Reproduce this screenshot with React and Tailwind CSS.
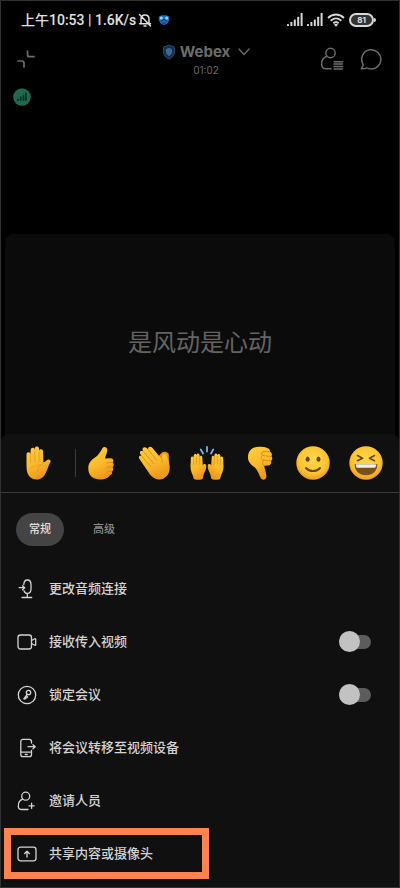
import React, { useState } from 'react';

// Shared yellow shading for the reaction drawings
const EmojiDefs = () => (
  <svg width="0" height="0" className="absolute" aria-hidden="true">
    <defs>
      <linearGradient id="skin" x1="0" y1="0" x2="0.4" y2="1">
        <stop offset="0" stopColor="#ffcf40" />
        <stop offset="0.6" stopColor="#fbb92c" />
        <stop offset="1" stopColor="#ec981e" />
      </linearGradient>
      <radialGradient id="face" cx="0.5" cy="0.4" r="0.6">
        <stop offset="0" stopColor="#ffd84a" />
        <stop offset="0.7" stopColor="#fcc332" />
        <stop offset="1" stopColor="#ec9a22" />
      </radialGradient>
    </defs>
  </svg>
);

const RaisedHand = () => (
  <svg viewBox="0 0 34 34" className="size-[34px]">
    <path
      d="M5.500 20V8.500c0-2.800 3.400-3 4-.4L9.700 3.900c0-2.600 3.700-2.800 4.100-.2l.1-1.500c.2-2.400 3.900-2.400 4.100.1l.2 2.500c.3-2.100 3.700-2 3.900.6l.3 11.200c1.800-.6 2.600-1.700 3.500-2.500 2-1.600 4.500 0 3.500 2-1.900 3.500-2.600 6.700-4.700 10.800-2 4.200-4.800 6.500-9.200 6.500-6.800 0-10-5-10-13.400z"
      fill="url(#skin)"
    />
    <path d="M9.600 7.500v9M13.900 5v11M18.100 6v10M9.500 22.500c3.500-3 7.500-4 12-3.500M19.500 19.500c-2.300 1.700-3.200 3.700-3 6" stroke="#e0951f" strokeWidth="0.7" fill="none" strokeLinecap="round" />
  </svg>
);

const ThumbUp = () => (
  <svg viewBox="0 0 34 34" className="size-[34px]">
    <path
      d="M18.500 2c1.500-2.300 5.200-.8 4.800 2.300-.3 2.800-1.500 5.200-2.300 8.200l5.500-.2c3 0 3.600 3.200 2 4.200 1.700 1 1.600 3.500 0 4.500 1.300 1.300 1 3.600-.8 4.400.9 1.500.3 3.400-1.700 3.900-1.400 2-3.700 4-8.800 4.200C9.500 33.700 4.300 30 4.300 22.500c0-5.500 2.700-8.300 6.700-11 3.200-2.100 5.700-5.800 7.500-9.500z"
      fill="url(#skin)"
    />
    <path d="M28.300 16.600c-2-.4-4-.3-5.500.6M28.300 21c-2-.4-4-.2-5.500.6M27.500 25.400c-2-.2-3.500 0-4.500.8" stroke="#d98716" strokeWidth="0.9" fill="none" strokeLinecap="round" />
  </svg>
);

const Clap = () => (
  <svg viewBox="0 0 34 34" className="size-[34px]">
    <path d="M20 12l4.800-5.500c2-1.500 4.500-.8 6 .2 1.500 1.300 1 3 1 4.800l.5 9.500-4 8z" fill="#e3921e" />
    <path
      d="M2.800 13.500c-2.200-2.700-.2-4.800 2-3.300L3.300 8C2 5.500 4.500 3.800 6.600 5.600L5.800 4.400C4.600 1.900 7.500.2 9.600 2l1.700 1.500C10.300 1 13.500-.4 15.300 1.700l9.500 11.500c.5-1.800-.3-4 1.200-5.300 1.400-1 3.200-.2 3.700 1.700.7 3.400 2.500 6.400 2.900 10.900.4 5.700-1.700 9.700-6 11.900-5 2.300-9.500.6-13.400-3.700z"
      fill="url(#skin)"
    />
    <path d="M5 10.500l8.800 10.300M6.800 6l9.700 11.600M11.500 4l8.500 10.600M24.800 13.200l.5 3.500" stroke="#dd8f1c" strokeWidth="0.9" fill="none" strokeLinecap="round" />
  </svg>
);

const RaisedHands = () => (
  <svg viewBox="0 0 34 34" className="size-[34px]">
    <path d="M10.800 3.500l2.200 4M17 1v4.500M23.200 3.500l-2.200 4" stroke="#74b4e6" strokeWidth="1.800" fill="none" strokeLinecap="round" />
    <g id="leftHand">
      <path
        d="M.5 20l.4-8c.2-2 2.300-2 2.600-.2l.2-2.300c.2-2 2.500-2.200 2.900-.2.200-2.200 2.700-2.300 3-.1l.2 1.800c.3-1.600 2.200-1.500 2.500.3l.5 8.200c.7-1.800 3-2 3.400 0 .3 3-.9 5.200-2.100 7.700-.8 2-.8 3-1.300 5-.8 2-8.400 2-9.200 0C3 28.500.5 26 .5 20z"
        fill="url(#skin)"
      />
      <path d="M3.600 12.500v6M6.600 10.500V18M9.700 11.500v7" stroke="#dd8f1c" strokeWidth="0.7" fill="none" strokeLinecap="round" />
    </g>
    <use href="#leftHand" transform="translate(34 0) scale(-1 1)" />
  </svg>
);

const ThumbDown = () => (
  <svg viewBox="0 0 34 34" className="size-[34px]">
    <path
      d="M5 11.500C5 4.500 9.500.8 16 .8c3.200 0 6 .1 8 1.300 2 .3 3.300 1.900 3 3.700 1.800.8 2.500 3 1.400 4.500 1.300 1.200 1.200 3.500-.4 4.500.7 2.800-.6 4.500-3 4.600l-3.800.3c.4 3.300 2 6.800 2.200 10.300.2 3.600-3.600 4.900-5.500 2.200-2-3.500-3-7.600-6-10.600C8.300 18.600 5 16.500 5 11.500z"
      fill="url(#skin)"
    />
    <path d="M26.700 6c-2.500-.8-5-.8-7.500.2-1.300 1-.8 2.800.6 3.200 2.700.8 5.300.8 8.100.9M19.500 9.500c-2 1.200-1.600 3.600.2 4.300 2.500.8 5 .9 7.800 1M20.500 14.200c-1.500 1.600-.8 3.800 0 5.300" stroke="#d98716" strokeWidth="0.9" fill="none" strokeLinecap="round" />
  </svg>
);

const Smile = () => (
  <svg viewBox="0 0 34 34" className="size-[34px]">
    <circle cx="17" cy="17" r="16.7" fill="url(#face)" />
    <ellipse cx="11.7" cy="13.2" rx="2" ry="2.6" fill="#6b4413" />
    <ellipse cx="22.5" cy="13.2" rx="2" ry="2.6" fill="#6b4413" />
    <path d="M10 22c3.500 4 10.500 4 14 0" stroke="#6b4413" strokeWidth="2" fill="none" strokeLinecap="round" />
  </svg>
);

const Laugh = () => (
  <svg viewBox="0 0 34 34" className="size-[34px]">
    <circle cx="17" cy="17" r="16.7" fill="url(#face)" />
    <path d="M8.500 9.500l5 2.800-5 2.400M25.500 9.500l-5 2.800 5 2.400" stroke="#6b4413" strokeWidth="1.6" fill="none" strokeLinecap="round" strokeLinejoin="round" />
    <path d="M5.700 18h22.600c.6 6.800-4.700 11.200-11.300 11.200S5.100 24.800 5.700 18z" fill="#7a501b" />
    <path d="M6.800 18.300h20.400c.2 2-.6 3.400-1.900 3.400H8.700c-1.300 0-2.100-1.400-1.900-3.400z" fill="#f4f0e6" />
  </svg>
);

const reactions = [
  { name: '赞', icon: ThumbUp },
  { name: '鼓掌', icon: Clap },
  { name: '欢呼', icon: RaisedHands },
  { name: '不赞同', icon: ThumbDown },
  { name: '微笑', icon: Smile },
  { name: '大笑', icon: Laugh }
];

// 20px line icon frame used by the menu rows
const LineIcon = ({ children }) => (
  <svg viewBox="0 0 20 20" className="size-5 shrink-0" fill="none" stroke="currentColor" strokeWidth="1.3" strokeLinecap="round" strokeLinejoin="round" aria-hidden="true">
    {children}
  </svg>
);

const AudioIcon = () => (
  <LineIcon>
    <path d="M6.800 5.500C6.900 2.800 8.300 1 10.400 1c2.200 0 3.600 1.900 3.600 4.600v4.200c0 2.700-1.400 4.600-3.600 4.600-1.600 0-2.900-1-3.400-2.700M10.300 14.400v4M5 18.500h9.700M2.200 8.700h5.200M5.500 6.700l2.200 2-2.200 2" />
  </LineIcon>
);

const VideoIcon = () => (
  <LineIcon>
    <rect x="1" y="3" width="13.5" height="14" rx="2.5" />
    <path d="M14.500 8.500l3.400-1.800c.4-.2.800 0 .8.500v5.600c0 .5-.4.700-.8.500l-3.400-1.800" />
  </LineIcon>
);

const LockIcon = () => (
  <LineIcon>
    <circle cx="10" cy="10" r="8.7" />
    <circle cx="11.5" cy="7.5" r="2.2" />
    <path d="M10.200 9.300l-3.400 4.500M9.200 10.700l1.300 1c-.2 1-1 1.500-2 1.200-.1 1-.8 1.400-1.700.9" />
  </LineIcon>
);

const TransferIcon = () => (
  <LineIcon>
    <path d="M14.500 5V3.500c0-1.400-.8-2.200-2.200-2.200H6c-1.400 0-2.200.8-2.200 2.200v13c0 1.400.8 2.200 2.200 2.200h6.300c1.400 0 2.200-.8 2.200-2.200V12.500M3.800 14.200h10.700M8.200 16.500h2M11 8.700h7M16 6.700l2.200 2-2.200 2" />
  </LineIcon>
);

const InviteIcon = () => (
  <LineIcon>
    <circle cx="8.7" cy="5.2" r="4" />
    <path d="M5.800 8.200c-3 1-4.600 3.800-4.500 7 .1 2 1.100 3.300 3.200 3.300H11M14.600 12.200v5.200M12 14.800h5.200" />
  </LineIcon>
);

const ShareIcon = () => (
  <LineIcon>
    <rect x="1" y="3.2" width="18" height="13.6" rx="2.5" />
    <path d="M10 13V7.500M7.700 9.500L10 7.200l2.300 2.300" />
  </LineIcon>
);

const menuItems = [
  { id: 'audio', label: '更改音频连接', icon: AudioIcon },
  { id: 'video', label: '接收传入视频', icon: VideoIcon, toggle: true },
  { id: 'lock', label: '锁定会议', icon: LockIcon, toggle: true },
  { id: 'transfer', label: '将会议转移至视频设备', icon: TransferIcon },
  { id: 'invite', label: '邀请人员', icon: InviteIcon },
  { id: 'share', label: '共享内容或摄像头', icon: ShareIcon, highlight: true }
];

const SignalIcon = () => (
  <svg viewBox="0 0 16 13" className="h-[13px] w-4" fill="#d8d8d8" aria-hidden="true">
    <rect x="0" y="11" width="2" height="2" rx="0.5" />
    <rect x="3.4" y="9" width="2" height="4" rx="0.5" />
    <rect x="6.8" y="6.5" width="2" height="6.5" rx="0.5" />
    <rect x="10.2" y="3.7" width="2" height="9.3" rx="0.5" />
    <rect x="13.6" y="0" width="2" height="13" rx="0.5" />
  </svg>
);

const StatusBar = () => (
  <div className="flex h-[37px] items-center justify-between pr-[23px] pl-5 text-[#e0e0e0]">
    <div className="flex items-center">
      <span className="font-[Roboto,'Noto_Sans_CJK_SC',sans-serif] text-sm font-medium whitespace-nowrap">上午10:53 | 1.6K/s</span>
      <svg viewBox="0 0 14 14" className="ml-0.5 size-3.5" fill="none" stroke="currentColor" strokeWidth="1.5" strokeLinecap="round" aria-hidden="true">
        <path d="M3 10.500V6.300C3 3.500 4.700 2 7 2s4 1.500 4 4.300v4.200M1.500 10.800h11M6 13h2M1.500 1.500l11 11.500" />
      </svg>
      <svg viewBox="0 0 12 12" className="ml-1.5 size-3" aria-hidden="true">
        <path d="M1 2.500C3 .8 9 .8 11 2.500c1 3-.5 7.500-5 8.500C1.500 10 0 5.500 1 2.500z" fill="#1c6fc0" />
        <circle cx="3.3" cy="4" r="1.5" fill="#9fd6ee" />
        <circle cx="8.7" cy="4" r="1.5" fill="#9fd6ee" />
        <path d="M3 7.200l3-1.700 3 1.700M4.500 9h3" stroke="#0b2f60" fill="none" />
      </svg>
    </div>
    <div className="flex items-center gap-1">
      <SignalIcon />
      <SignalIcon />
      <svg viewBox="0 0 18 14" className="h-3.5 w-[18px]" fill="none" stroke="#d8d8d8" strokeWidth="1.9" aria-hidden="true">
        <path d="M1 5c4.800-4.600 11.200-4.600 16 0M3.700 7.700c3.200-3 7.400-3 10.600 0M6.300 10.300c1.600-1.500 3.800-1.500 5.400 0" />
        <path d="M7 11.500L9 13.800l2-2.300c-1.200-.9-2.800-.9-4 0z" fill="#d8d8d8" stroke="none" />
      </svg>
      <div className="flex items-center">
        <div className="flex h-3.5 w-[25px] items-center justify-center rounded-full border-2 border-[#d8d8d8] bg-[#333333] text-[8px] font-bold">81</div>
        <div className="h-1 w-0.5 rounded-r-full bg-[#d8d8d8]" />
      </div>
    </div>
  </div>
);

const MeetingHeader = () => (
  <header className="grid grid-cols-[1fr_auto_1fr] items-center px-4 text-[#6c6c6c]">
    <button type="button" aria-label="最小化" className="justify-self-start">
      <svg viewBox="0 0 18 18" className="size-[18px]" fill="none" stroke="currentColor" strokeWidth="1.7" strokeLinecap="round" aria-hidden="true">
        <path d="M10.500 1v3.700c0 1.300.7 2 2 2H17M1 11h4c1.300 0 2 .7 2 2v4" />
      </svg>
    </button>
    <div className="ml-3 flex flex-col items-center pt-0.5">
      <button type="button" className="flex items-center">
        <svg viewBox="0 0 14 16" className="mr-1 h-4 w-3.5" aria-hidden="true">
          <path d="M7 1l5.500 2v5c0 3.300-2.200 5.700-5.500 7C3.700 13.700 1.500 11.300 1.500 8V3z" fill="#14304c" stroke="#25496e" />
          <path d="M7 4l3 1v3c0 1.800-1.200 3.100-3 4-1.800-.9-3-2.200-3-4V5z" fill="#3c6a94" />
        </svg>
        <span className="text-[15px] leading-5 font-bold">Webex</span>
        <svg viewBox="0 0 12 8" className="ml-2 h-2 w-3" fill="none" stroke="currentColor" strokeWidth="1.3" strokeLinecap="round" aria-hidden="true">
          <path d="M1 1l5 5.500L11 1" />
        </svg>
      </button>
      <span className="text-[10px] leading-4">01:02</span>
    </div>
    <div className="flex items-center gap-4 justify-self-end pr-px">
      <button type="button" aria-label="参会者">
        <svg viewBox="0 0 24 24" className="size-6" fill="none" stroke="currentColor" strokeWidth="1.5" strokeLinecap="round" aria-hidden="true">
          <circle cx="10.5" cy="6" r="4.7" />
          <path d="M7 9.300c-3.400 1.200-5.500 4.300-5.400 8 .1 2.900 1.300 4.400 3.900 4.400H11M14 14.700h8.500M14 17.100h8.500M14 19.500h8.500M14 21.900h8.500" />
        </svg>
      </button>
      <button type="button" aria-label="聊天">
        <svg viewBox="0 0 22 22" className="size-[22px]" fill="none" stroke="currentColor" strokeWidth="1.5" strokeLinejoin="round" aria-hidden="true">
          <path d="M2.800 15.800A9.600 9.600 0 1 1 7 19.900c-1.800.8-3.700 1.100-5.700.9 1.200-1.300 2.200-2.800 1.500-5z" />
        </svg>
      </button>
    </div>
  </header>
);

const MenuRow = ({ item, checked, onToggle }) => {
  const Icon = item.icon;

  if (item.toggle) {
    return (
      <label className="flex h-[53px] items-center pr-7 pl-4">
        <Icon />
        <span className="ml-3 grow">{item.label}</span>
        <input type="checkbox" role="switch" checked={checked} onChange={onToggle} className="peer sr-only" />
        <span className="flex h-3.5 w-8 items-center rounded-full bg-[#5c5c5c] peer-checked:justify-end peer-checked:bg-green-700">
          <span className="size-[21px] shrink-0 rounded-full bg-[#c2c2c2]" />
        </span>
      </label>
    );
  }

  return (
    <button type="button" className="relative flex h-[53px] w-full items-center pl-4 text-left">
      <Icon />
      <span className="ml-3">{item.label}</span>
      {item.highlight && <span className="absolute top-px left-[3px] h-[51px] w-[205px] border-[7px] border-[#fb834f]" />}
    </button>
  );
};

const App = () => {
  const [tab, setTab] = useState('general');
  const [enabled, setEnabled] = useState({ video: false, lock: false });

  const toggle = (id) => setEnabled((prev) => ({ ...prev, [id]: !prev[id] }));

  return (
    <div className="flex min-h-screen flex-col border border-[#303232] bg-black font-[Inter,'Noto_Sans_CJK_SC',sans-serif] text-[#d4d4d4]">
      <EmojiDefs />
      <StatusBar />
      <div className="mt-0.5">
        <MeetingHeader />
      </div>
      <div className="mt-2.5 px-3">
        <svg viewBox="0 0 18 18" className="size-[18px]" role="img" aria-label="网络良好">
          <circle cx="9" cy="9" r="8.8" fill="#1d6a4f" />
          <path d="M5 12.800v-2M7.800 12.800V8.500M10.500 12.800V6.800M13 12.800V4.800" stroke="#0a2b20" strokeWidth="1.7" />
        </svg>
      </div>

      {/* Speaker tile */}
      <div className="mx-1 mt-32 flex h-[216px] items-center justify-center rounded-lg bg-[#0b0b0b] pt-0.5">
        <span className="text-2xl text-[#646464]">是风动是心动</span>
      </div>

      {/* Options sheet */}
      <section className="-mt-4 grow rounded-t-lg bg-[#101010]">
        <div className="flex h-[59px] items-center border-b border-[#3a3a3a] pr-4 pl-5">
          <button type="button" aria-label="举手">
            <RaisedHand />
          </button>
          <span className="mr-2 ml-5 h-7 w-px bg-[#3a3a3a]" />
          <div className="flex grow justify-between">
            {reactions.map(({ name, icon: Icon }) => (
              <button key={name} type="button" aria-label={name}>
                <Icon />
              </button>
            ))}
          </div>
        </div>

        <div className="flex gap-4 px-[15px] pt-5 pb-4 text-[11px] font-medium">
          <button
            type="button"
            onClick={() => setTab('general')}
            className={`h-[33px] w-12 rounded-full ${tab === 'general' ? 'bg-[#444444] text-[#e0e0e0]' : 'text-[#8a8a8a]'}`}
          >
            常规
          </button>
          <button
            type="button"
            onClick={() => setTab('advanced')}
            className={`h-[33px] w-12 rounded-full ${tab === 'advanced' ? 'bg-[#444444] text-[#e0e0e0]' : 'text-[#8a8a8a]'}`}
          >
            高级
          </button>
        </div>

        <div className="text-[13px] font-medium">
          {menuItems.map((item) => (
            <MenuRow key={item.id} item={item} checked={!!enabled[item.id]} onToggle={() => toggle(item.id)} />
          ))}
        </div>
      </section>
    </div>
  );
};

export default App;
